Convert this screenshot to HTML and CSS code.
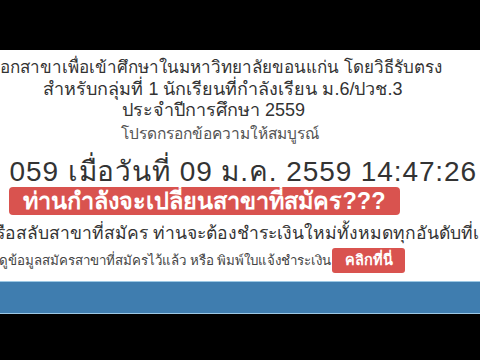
FILE: index.html
```html
<!DOCTYPE html>
<html lang="th">
<head>
<meta charset="utf-8">
<title>เลือกสาขา</title>
<link rel="stylesheet" href="styles.css">
</head>
<body>
<div class="screen">
  <div class="letterbox top"></div>
  <main class="panel">
    <header class="heading">
      <h1 class="title main">เลือกสาขาเพื่อเข้าศึกษาในมหาวิทยาลัยขอนแก่น โดยวิธีรับตรง</h1>
      <h2 class="title sub">สำหรับกลุ่มที่ 1 นักเรียนที่กำลังเรียน ม.6/ปวช.3</h2>
      <h2 class="title sub year">ประจำปีการศึกษา 2559</h2>
      <p class="hint">โปรดกรอกข้อความให้สมบูรณ์</p>
    </header>
    <p class="stamp">ที่ 059 เมื่อวันที่ 09 ม.ค. 2559 14:47:26</p>
    <div class="alert">ท่านกำลังจะเปลี่ยนสาขาที่สมัคร???</div>
    <p class="warn">หรือสลับสาขาที่สมัคร ท่านจะต้องชำระเงินใหม่ทั้งหมดทุกอันดับที่เลือก</p>
    <p class="links"><span>ดูข้อมูลสมัครสาขาที่สมัครไว้แล้ว หรือ พิมพ์ใบแจ้งชำระเงิน</span><a class="btn" href="#">คลิกที่นี่</a></p>
  </main>
  <div class="bluebar"></div>
  <div class="letterbox bottom"></div>
</div>
</body>
</html>
```

FILE: styles.css
```css
html, body {
  margin: 0;
  padding: 0;
  background: #000;
}
body {
  font-family: "Liberation Sans", Arial, sans-serif;
  color: #333;
}
.screen {
  width: 480px;
  height: 360px;
  overflow: hidden;
  display: flex;
  flex-direction: column;
  background: #000;
}
.letterbox.top {
  height: 50px;
  flex: none;
  background: #000;
}
.letterbox.bottom {
  flex: 1;
  background: #000;
}
.panel {
  height: 231px;
  flex: none;
  background: #fff;
  display: flex;
  flex-direction: column;
  white-space: nowrap;
}
.heading {
  width: 446px;
  display: flex;
  flex-direction: column;
  align-items: center;
  padding-top: 8px;
}
.title {
  margin: 0;
  font-weight: normal;
  line-height: 20px;
  color: #333;
}
.title.main {
  font-size: 17px;
  margin-right: 20px;
}
.title.sub {
  font-size: 18px;
  margin-top: 1px;
}
.title.year {
  margin-right: 19px;
}
.hint {
  margin: 5px 6px 0 0;
  font-size: 15.5px;
  line-height: 18px;
  color: #555;
}
.stamp {
  margin: 13px 0 0 -18px;
  font-size: 28px;
  letter-spacing: 0.9px;
  line-height: 31px;
  color: #333;
}
.alert {
  align-self: flex-start;
  margin: 0 0 0 9px;
  width: 391px;
  height: 28px;
  box-sizing: border-box;
  background: #d9534f;
  border-radius: 4px;
  color: #fff;
  font-weight: bold;
  font-size: 23.5px;
  line-height: 28px;
  text-align: center;
}
.warn {
  margin: 8px 0 0 -16px;
  font-size: 17.5px;
  line-height: 20px;
  color: #333;
}
.links {
  margin: 5px 0 0 -1px;
  display: flex;
  align-items: center;
  font-size: 13.3px;
  color: #444;
}
.btn {
  margin-left: 1px;
  display: inline-block;
  width: 73px;
  height: 25px;
  line-height: 25px;
  text-align: center;
  background: #d9534f;
  border-radius: 3px;
  color: #fff;
  font-weight: bold;
  font-size: 14.5px;
  text-decoration: none;
}
.bluebar {
  height: 33px;
  flex: none;
  box-sizing: border-box;
  background: #3f7daf;
  border-top: 1px solid #9cc8e4;
  border-bottom: 1px solid #9cc8e4;
}
```
